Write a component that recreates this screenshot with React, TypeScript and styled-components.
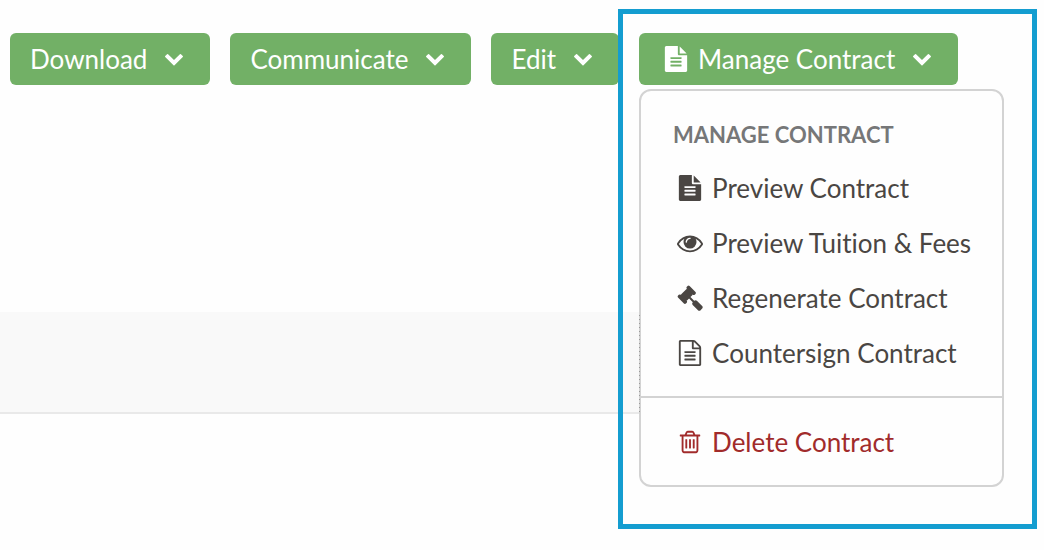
import React from "react";
import styled, { createGlobalStyle } from "styled-components";

const GlobalStyle = createGlobalStyle`
  * { box-sizing: border-box; }
  body {
    margin: 0;
    background: #fefefe;
    color: #4a4643;
    font-family: Lato, "Liberation Sans", sans-serif;
    font-size: 26px;
    line-height: 32px;
    font-variant-ligatures: none;
  }
`;

const paths = {
  chevron:
    "M1683 808l-742 741q-19 19-45 19t-45-19l-742-741q-19-19-19-45.5t19-45.5l166-165q19-19 45-19t45 19l531 531 531-531q19-19 45-19t45 19l166 165q19 19 19 45.5t-19 45.5z",
  file:
    "M1596 476q14 14 28 36h-472v-472q22 14 36 28zm-476 164h544v1056q0 40-28 68t-68 28h-1344q-40 0-68-28t-28-68v-1600q0-40 28-68t68-28h800v544q0 40 28 68t68 28zm160 736v-64q0-14-9-23t-23-9h-704q-14 0-23 9t-9 23v64q0 14 9 23t23 9h704q14 0 23-9t9-23zm0-256v-64q0-14-9-23t-23-9h-704q-14 0-23 9t-9 23v64q0 14 9 23t23 9h704q14 0 23-9t9-23zm0-256v-64q0-14-9-23t-23-9h-704q-14 0-23 9t-9 23v64q0 14 9 23t23 9h704q14 0 23-9t9-23z",
  fileOutline:
    "M1596 380q28 28 48 76t20 88v1152q0 40-28 68t-68 28h-1344q-40 0-68-28t-28-68v-1600q0-40 28-68t68-28h896q40 0 88 20t76 48zm-444-244v376h376q-10-29-22-41l-313-313q-12-12-41-22zm384 1528v-1024h-416q-40 0-68-28t-28-68v-416h-768v1536h1280zm-1024-864q0-14 9-23t23-9h704q14 0 23 9t9 23v64q0 14-9 23t-23 9h-704q-14 0-23-9t-9-23v-64zm736 224q14 0 23 9t9 23v64q0 14-9 23t-23 9h-704q-14 0-23-9t-9-23v-64q0-14 9-23t23-9h704zm0 256q14 0 23 9t9 23v64q0 14-9 23t-23 9h-704q-14 0-23-9t-9-23v-64q0-14 9-23t23-9h704z",
  eye:
    "M1664 960q-152-236-381-353 61 104 61 225 0 185-131.5 316.5t-316.5 131.5-316.5-131.5-131.5-316.5q0-121 61-225-229 117-381 353 133 205 333.5 326.5t434.5 121.5 434.5-121.5 333.5-326.5zm-720-384q0-20-14-34t-34-14q-125 0-214.5 89.5t-89.5 214.5q0 20 14 34t34 14 34-14 14-34q0-86 61-147t147-61q20 0 34-14t14-34zm848 384q0 34-20 69-140 230-376.5 368.5t-499.5 138.5-499.5-139-376.5-368q-20-35-20-69t20-69q140-229 376.5-368t499.5-139 499.5 139 376.5 368q20 35 20 69z",
  gavel:
    "M1771 1536q0 53-37 90l-107 108q-39 37-91 37-53 0-90-37l-363-364q-38-36-38-90 0-53 43-96l-256-256-126 126q-14 14-34 14t-34-14q2 2 12.5 12t12.5 13 10 11.5 10 13.5 6 13.5 5.5 16.5 1.5 18q0 38-28 68-3 3-16.5 18t-19 20.5-18.5 16.5-20.5 15.5-22 9-26 4.5q-40 0-68-28l-408-408q-28-28-28-68 0-13 4.5-26t9-22 15.5-20.5 16.5-18.5 20.5-19 18-16.5q30-28 68-28 10 0 18 1.5t16.5 5.5 13.5 6 13.5 10 11.5 10 13 12.5 12 12.5q-14-14-14-34t14-34l348-348q14-14 34-14t34 14q-2-2-12.5-12t-12.5-13-10-11.5-10-13.5-6-13.5-5.5-16.5-1.5-18q0-38 28-68 3-3 16.5-18t19-20.5 18.5-16.5 20.5-15.5 22-9 26-4.5q40 0 68 28l408 408q28 28 28 68 0 13-4.5 26t-9 22-15.5 20.5-16.5 18.5-20.5 19-18 16.5q-30 28-68 28-10 0-18-1.5t-16.5-5.5-13.5-6-13.5-10-11.5-10-13-12.5-12-12.5q14 14 14 34t-14 34l-126 126 256 256q43-43 96-43 52 0 91 37l363 363q37 39 37 91z",
  trash:
    "M704 736v576q0 14-9 23t-23 9h-64q-14 0-23-9t-9-23v-576q0-14 9-23t23-9h64q14 0 23 9t9 23zm256 0v576q0 14-9 23t-23 9h-64q-14 0-23-9t-9-23v-576q0-14 9-23t23-9h64q14 0 23 9t9 23zm256 0v576q0 14-9 23t-23 9h-64q-14 0-23-9t-9-23v-576q0-14 9-23t23-9h64q14 0 23 9t9 23zm128 724v-948h-896v948q0 22 7 40.5t14.5 27 10.5 8.5h832q3 0 10.5-8.5t14.5-27 7-40.5zm-672-1076h448l-48-117q-7-9-17-11h-317q-10 2-17 11zm928 32v64q0 14-9 23t-23 9h-96v948q0 83-47 143.5t-113 60.5h-832q-66 0-113-58.5t-47-141.5v-952h-96q-14 0-23-9t-9-23v-64q0-14 9-23t23-9h309l70-167q15-37 54-63t79-26h320q40 0 79 26t54 63l70 167h309q14 0 23 9t9 23z",
};

const Svg = styled.svg<{ $size: number }>`
  display: block;
  flex: none;
  width: ${(p) => p.$size}px;
  height: ${(p) => p.$size}px;
  fill: currentColor;
`;

function Icon({ name, size = 26 }: { name: keyof typeof paths; size?: number }) {
  return (
    <Svg $size={size} viewBox="0 0 1792 1792" aria-hidden="true">
      <path d={paths[name]} />
    </Svg>
  );
}

const Page = styled.main`
  position: relative;
  overflow: hidden;
  min-height: 100vh;
`;

const Toolbar = styled.div`
  display: flex;
  gap: 20px;
  padding: 33px 10px 0;
`;

const ToolButton = styled.button<{ $withIcon?: boolean }>`
  display: flex;
  align-items: center;
  height: 52px;
  padding: 0 26px 0 ${(p) => (p.$withIcon ? 24 : 20)}px;
  border: 0;
  border-radius: 6px;
  background: #72b066;
  color: #fff;
  font: inherit;
  font-variant-ligatures: none;
  white-space: nowrap;
  cursor: pointer;
`;

const ButtonLabel = styled.span`
  margin-right: 17px;
  svg + & { margin-left: 9px; }
`;

const Chevron = styled.span`
  padding-bottom: 3px;
`;

const Dropdown = styled.div`
  position: relative;
`;

const Menu = styled.div`
  position: absolute;
  top: 56px;
  left: 0;
  border: 2px solid #d3d3d3;
  border-radius: 12px;
  background: #fefefe;
`;

const MenuSection = styled.div`
  padding: 16px 31px 16px 32px;
  & + & {
    border-top: 2px solid #d3d3d3;
  }
`;

const MenuHeading = styled.h2`
  margin: 0;
  padding: 13px 0 10px;
  color: #767778;
  font-size: 22px;
  font-weight: 700;
  line-height: 30px;
`;

const MenuItem = styled.button<{ $danger?: boolean }>`
  display: flex;
  align-items: center;
  gap: 9px;
  height: 55px;
  padding: 0 0 0 4px;
  border: 0;
  background: none;
  color: ${(p) => (p.$danger ? "#a12b2b" : "#4a4643")};
  font: inherit;
  font-variant-ligatures: none;
  white-space: nowrap;
  cursor: pointer;
`;

const Highlight = styled.div`
  position: absolute;
  top: -24px;
  left: -21px;
  width: 419px;
  height: 520px;
  border: 5px solid #149dd0;
  pointer-events: none;
`;

const Band = styled.div`
  width: 640px;
  max-width: 100%;
  height: 102px;
  margin-top: 227px;
  border-bottom: 2px solid #e9e9e9;
  background: #f9f9f9;
`;

const DottedEdge = styled.div`
  position: relative;
  width: 1px;
  height: 100px;
  margin-left: auto;
  background: repeating-linear-gradient(#d3d3d3 0 3px, #999 3px 4px);
`;

export default function App() {
  return (
    <Page>
      <GlobalStyle />
      <Toolbar>
        {["Download", "Communicate", "Edit"].map((label) => (
          <ToolButton key={label} type="button" aria-haspopup="menu">
            <ButtonLabel>{label}</ButtonLabel>
            <Chevron><Icon name="chevron" size={20} /></Chevron>
          </ToolButton>
        ))}
        <Dropdown>
          <ToolButton $withIcon type="button" aria-haspopup="menu" aria-expanded="true">
            <Icon name="file" />
            <ButtonLabel>Manage Contract</ButtonLabel>
            <Chevron><Icon name="chevron" size={20} /></Chevron>
          </ToolButton>
          <Menu>
            <MenuSection>
              <MenuHeading>MANAGE CONTRACT</MenuHeading>
              <MenuItem type="button"><Icon name="file" />Preview Contract</MenuItem>
              <MenuItem type="button"><Icon name="eye" />Preview Tuition &amp; Fees</MenuItem>
              <MenuItem type="button"><Icon name="gavel" />Regenerate Contract</MenuItem>
              <MenuItem type="button"><Icon name="fileOutline" />Countersign Contract</MenuItem>
            </MenuSection>
            <MenuSection>
              <MenuItem $danger type="button"><Icon name="trash" />Delete Contract</MenuItem>
            </MenuSection>
          </Menu>
          <Highlight />
        </Dropdown>
      </Toolbar>
      <Band>
        <DottedEdge />
      </Band>
    </Page>
  );
}
